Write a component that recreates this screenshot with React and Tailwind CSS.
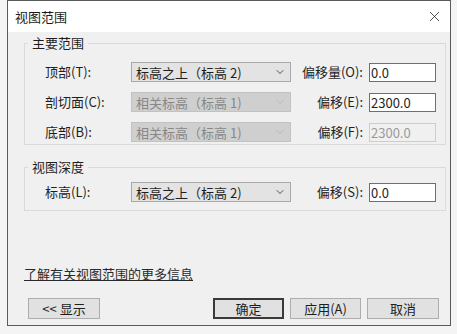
import React from 'react';
import { ChevronDown, X } from 'lucide-react';

const font = { fontFamily: '"Noto Sans CJK SC", "Liberation Sans", sans-serif' };

const Select = ({ value, disabled }) => (
  <div
    className={
      'w-[160px] h-[20px] flex items-center justify-between pl-[4px] pr-[4px] border ' +
      (disabled
        ? 'bg-[#cfcfcf] border-[#c2c2c2] text-[#878787]'
        : 'bg-[#e3e3e3] border-[#a9a9a9] text-[#1e1e1e]')
    }
  >
    <span className="leading-none">{value}</span>
    <ChevronDown
      size={12}
      strokeWidth={1.6}
      className={disabled ? 'text-[#b3b3b3]' : 'text-[#2a2a2a]'}
    />
  </div>
);

const Input = ({ value, disabled }) => (
  <div
    className={
      'w-[67px] h-[19px] flex items-center pl-[1px] border ' +
      (disabled
        ? 'bg-[#f0f0f0] border-[#cdcdcd] text-[#9a9a9a]'
        : 'bg-white border-[#6f6f6f] text-[#1e1e1e]')
    }
  >
    <span className="leading-none">{value}</span>
  </div>
);

const Row = ({ label, select, selectDisabled, offset, input, inputDisabled }) => (
  <div className="flex items-center h-[20px]">
    <div className="w-[86px] text-[#1e1e1e]">{label}</div>
    <Select value={select} disabled={selectDisabled} />
    <div className="w-[72px] text-right text-[#1e1e1e]">{offset}</div>
    <div className="ml-[6px]">
      <Input value={input} disabled={inputDisabled} />
    </div>
  </div>
);

const Button = ({ children, primary, width }) => (
  <button
    className={
      'h-[21px] flex items-center justify-center bg-[#e1e1e1] text-[#1e1e1e] ' +
      width +
      (primary ? ' border-2 border-[#3a3a3a]' : ' border border-[#adadad]')
    }
  >
    {children}
  </button>
);

export default function App() {
  return (
    <div className="w-[457px] h-[334px] bg-[#f4f4f4] pl-[7px] text-[13px]" style={font}>
      <div className="w-[444px] h-[326px] border border-[#5a5a5a] bg-[#f0f0f0] flex flex-col">
        {/* title bar */}
        <div className="h-[31px] bg-white flex items-center justify-between pl-[7px] pr-[7px]">
          <span className="text-[#1a1a1a]">视图范围</span>
          <X size={17} strokeWidth={1.1} className="text-[#222]" />
        </div>

        <div className="flex-1 flex flex-col pl-[16px] pr-[4px] pb-[6px]">
          {/* main range */}
          <fieldset className="mt-[3px] border border-[#dadada] pb-[2px]">
            <legend className="ml-[3px] px-[4px] leading-[16px] text-[#1e1e1e]">主要范围</legend>
            <div className="flex flex-col gap-[10px] pt-[11px] pl-[20px]">
              <Row label="顶部(T):" select="标高之上（标高 2)" offset="偏移量(O):" input="0.0" />
              <Row
                label="剖切面(C):"
                select="相关标高（标高 1)"
                selectDisabled
                offset="偏移(E):"
                input="2300.0"
              />
              <Row
                label="底部(B):"
                select="相关标高（标高 1)"
                selectDisabled
                offset="偏移(F):"
                input="2300.0"
                inputDisabled
              />
            </div>
          </fieldset>

          {/* view depth */}
          <fieldset className="mt-[14px] border border-[#dadada] pb-[8px]">
            <legend className="ml-[3px] px-[4px] leading-[16px] text-[#1e1e1e]">视图深度</legend>
            <div className="pt-[7px] pl-[20px]">
              <Row label="标高(L):" select="标高之上（标高 2)" offset="偏移(S):" input="0.0" />
            </div>
          </fieldset>

          <div className="flex-1" />

          <div className="leading-[16px]">
            <span className="underline text-[#2a2a2a]">了解有关视图范围的更多信息</span>
          </div>

          <div className="mt-[16px] flex items-center ml-[4px] mr-[7px]">
            <Button width="w-[72px]">&lt;&lt; 显示</Button>
            <div className="flex-1" />
            <div className="flex gap-[6px]">
              <Button primary width="w-[71px]">确定</Button>
              <Button width="w-[71px]">应用(A)</Button>
              <Button width="w-[72px]">取消</Button>
            </div>
          </div>
        </div>
      </div>
    </div>
  );
}
